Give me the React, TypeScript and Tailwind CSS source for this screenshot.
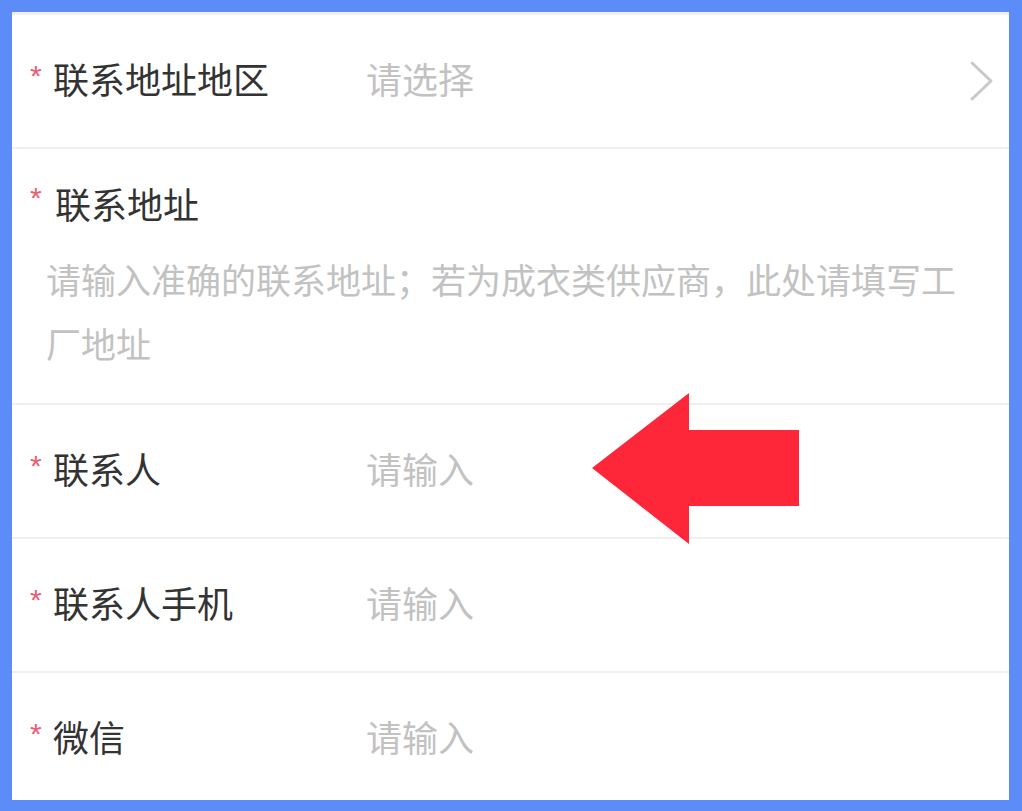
import React from "react";

const font = { fontFamily: '"Noto Sans CJK SC", "Noto Sans", sans-serif' };

function Star() {
  return (
    <span
      className="inline-block w-[23px] text-[30px] leading-none text-[#ec5c74] -translate-y-[5px]"
      style={{ fontFamily: '"Liberation Sans", Arial, sans-serif' }}
    >
      *
    </span>
  );
}

function Row({ label, placeholder, chevron }: { label: string; placeholder: string; chevron?: boolean }) {
  return (
    <div className="flex h-[132px] shrink-0 items-center pl-[18px] pr-[14px]">
      <div className="flex w-[336px] shrink-0 items-center">
        <Star />
        <span className="-translate-y-[3px] text-[36px] leading-none text-[#333333]">{label}</span>
      </div>
      <span className="flex-1 -translate-y-[3px] text-[36px] leading-none text-[#c2c2c2]">{placeholder}</span>
      {chevron && (
        <svg width="26" height="42" viewBox="0 0 26 42" className="shrink-0">
          <polyline points="3,3 22,21 3,39" fill="none" stroke="#c9c9c9" strokeWidth="3" strokeLinecap="round" strokeLinejoin="round" />
        </svg>
      )}
    </div>
  );
}

function Divider() {
  return <div className="h-[2px] shrink-0 bg-[#efefef]" />;
}

export default function App() {
  return (
    <div className="relative h-[811px] w-[1022px] overflow-hidden bg-[#5b8cf8] pt-[12px] pl-[12px] pr-[13px] pb-[11px]" style={font}>
      <div className="flex h-full flex-col overflow-hidden border-t-[3px] border-[#f0f0f0] bg-white">
        <Row label="联系地址地区" placeholder="请选择" chevron />
        <Divider />
        <div className="flex h-[254px] shrink-0 flex-col pl-[18px] pr-[30px] pt-[22px]">
          <div className="flex h-[64px] items-center">
            <Star />
            <span className="pl-[2px] text-[36px] leading-none text-[#333333]">联系地址</span>
          </div>
          <div className="mt-[12px] pl-[16px] text-[35px] leading-[64px] text-[#c2c2c2]">
            请输入准确的联系地址；若为成衣类供应商，此处请填写工厂地址
          </div>
        </div>
        <Divider />
        <Row label="联系人" placeholder="请输入" />
        <Divider />
        <Row label="联系人手机" placeholder="请输入" />
        <Divider />
        <Row label="微信" placeholder="请输入" />
      </div>
      <svg className="absolute left-0 top-0" width="1022" height="811" viewBox="0 0 1022 811">
        <polygon points="592,468 689,393 689,430 799,430 799,506 689,506 689,544" fill="#fe2739" />
      </svg>
    </div>
  );
}
